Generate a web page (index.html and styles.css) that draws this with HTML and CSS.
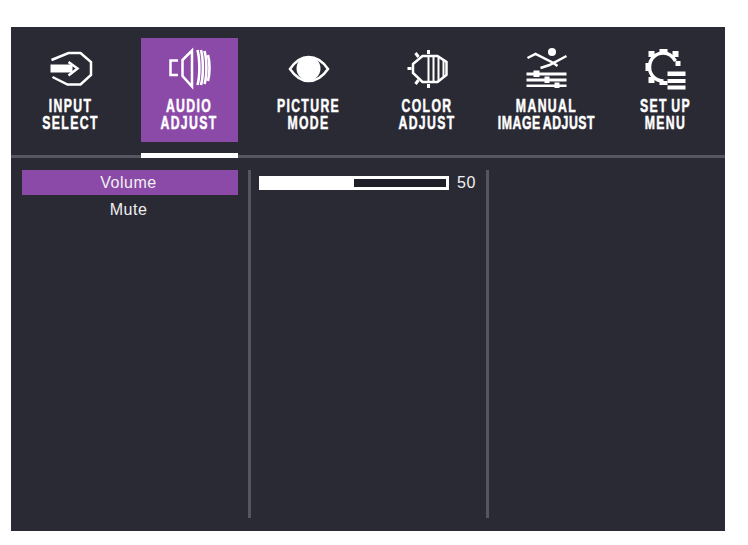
FILE: index.html
```html
<!DOCTYPE html>
<html lang="en">
<head>
<meta charset="utf-8">
<title>OSD Menu</title>
<link rel="stylesheet" href="styles.css">
</head>
<body>
<main class="osd">
  <nav class="tabs">
    <div class="tab">
      <div class="tile">
        <svg class="icon" viewBox="40.5 47 60 46">
          <path class="line" d="M51 60 L68 53 H80 L90.500 62 V75 L80 84.500 H67 L52 77"/>
          <path class="fill" d="M50 64.500 H72 V72.500 H50 Z"/>
          <path class="line" d="M68 62 L77 68.500 L68 75.500"/>
        </svg>
        <span class="label">INPUT<br>SELECT</span>
      </div>
    </div>
    <div class="tab is-active">
      <div class="tile">
        <svg class="icon" viewBox="159.5 47 60 46">
          <path class="line" d="M177.500 60.500 H170 V75 H177.500"/>
          <path class="line" d="M182 60 L191.500 50.500 V86.500 L182 76 Z"/>
          <path class="line thin" d="M197 50 C199.500 60 199.500 76 197 85"/>
          <path class="line thin" d="M200.500 50 C203 60 203 76 200.500 85"/>
          <path class="line thin" d="M204 51 C206.500 60 206.500 76 204 84"/>
          <path class="line thin" d="M207.500 55 C209.500 62 209.500 74 207.500 81"/>
        </svg>
        <span class="label">AUDIO<br>ADJUST</span>
      </div>
    </div>
    <div class="tab">
      <div class="tile">
        <svg class="icon" viewBox="278.5 47 60 46">
          <path class="line" d="M289.500 69 C295 61 301 57 308 57 C315 57 322 61 327.500 69 C322 77 315 81 308 81 C301 81 295 77 289.500 69 Z"/>
          <circle class="fill" cx="308" cy="68.500" r="12"/>
        </svg>
        <span class="label">PICTURE<br>MODE</span>
      </div>
    </div>
    <div class="tab">
      <div class="tile">
        <svg class="icon" viewBox="397.500 47 60 46">
          <path class="line" d="M412.500 64 L422 56 H437 L446 62 V75 L437 82 H422 L412.500 73 Z"/>
          <path class="line narrow" d="M428 56 V82 M433 56 V82 M438 57 V81 M443 60 V78"/>
          <path class="line heavy" d="M428 50 V54 M428 84 V88 M407 68.500 H411 M415 53 L418 57 M415 84 L418 80"/>
        </svg>
        <span class="label">COLOR<br>ADJUST</span>
      </div>
    </div>
    <div class="tab">
      <div class="tile">
        <svg class="icon" viewBox="516.500 47 60 46">
          <circle class="fill" cx="551.500" cy="52" r="4"/>
          <path class="line" d="M527 58 L535 54 L553 63 L557 66"/>
          <path class="line" d="M566 56 L549 65 L540 68"/>
          <path class="fill" d="M526 72.500 H533 V70.500 H539 V72.500 H566 V75.500 H539 V77 H533 V75.500 H526 Z M526 78.500 H544 V76.500 H549 V78.500 H566 V81.500 H549 V83 H544 V81.500 H526 Z M526 84.500 H554 V82.500 H559 V84.500 H566 V87 H559 V88 H554 V87 H526 Z"/>
        </svg>
        <span class="label">MANUAL<br><span class="tight">IMAGE ADJUST</span></span>
      </div>
    </div>
    <div class="tab">
      <div class="tile">
        <svg class="icon" viewBox="635.500 47 60 46">
          <path class="line wide" d="M675 61 C672 56 668 53 663 53 C655 53 649 59 649 67 C649 75 655 81 663 81"/>
          <path class="fill" d="M659 49 H667 V53 H659 Z M648 51 H654 V57 H648 Z M672 51 H678 V57 H672 Z M645 63 H649 V71 H645 Z M648 77 H654 V83 H648 Z M659 81 H667 V85 H659 Z M675 61 H680 V66 H675 Z"/>
          <path class="fill" d="M667 71.500 H685 V76 H667 Z M667 79 H685 V83 H667 Z M667 85.500 H685 V89.500 H667 Z"/>
        </svg>
        <span class="label">SET UP<br>MENU</span>
      </div>
    </div>
  </nav>
  <section class="content">
    <ul class="menu">
      <li class="menu-item is-selected">Volume</li>
      <li class="menu-item">Mute</li>
    </ul>
    <div class="detail">
      <div class="slider">
        <div class="track"><div class="level" style="width: 50%"></div></div>
        <span class="value">50</span>
      </div>
    </div>
    <div class="aux"></div>
  </section>
</main>
</body>
</html>
```
FILE: styles.css
```css
html, body {
  margin: 0;
  padding: 0;
  background: #fff;
}

body {
  padding: 27px 0 14px 11px;
  font-family: "Liberation Sans", Arial, sans-serif;
}

.osd {
  width: 714px;
  height: 504px;
  background: #2a2a35;
  color: #fff;
  display: flex;
  flex-direction: column;
}

.tabs {
  display: grid;
  grid-template-columns: repeat(6, 119px);
  height: 128px;
  border-bottom: 3px solid #565660;
  flex: none;
}

.tab {
  position: relative;
  padding-top: 11px;
}

.tile {
  width: 97px;
  height: 104px;
  margin: 0 auto;
  display: flex;
  flex-direction: column;
  align-items: center;
  padding-top: 9px;
  box-sizing: border-box;
}

.is-active .tile {
  background: #8b4aa8;
}

.is-active::after {
  content: "";
  position: absolute;
  left: 11px;
  width: 97px;
  bottom: -3px;
  height: 5px;
  background: #fff;
}

.icon {
  width: 60px;
  height: 46px;
  flex: none;
}

.line {
  fill: none;
  stroke: #fff;
  stroke-width: 2.5;
}

.line.thin {
  stroke-width: 2.6;
}

.line.narrow {
  stroke-width: 2;
}

.line.heavy {
  stroke-width: 3;
}

.line.wide {
  stroke-width: 3.5;
}

.fill {
  fill: #fff;
}

.label {
  margin-top: 5px;
  font-family: "Liberation Sans", Arial, sans-serif;
  font-weight: 700;
  font-size: 18px;
  line-height: 17px;
  letter-spacing: 2px;
  word-spacing: -2px;
  text-align: center;
  white-space: nowrap;
  transform: scaleX(0.68);
  -webkit-text-stroke: 0.5px #fff;
}

.tight {
  letter-spacing: 0.8px;
  word-spacing: -2px;
}

.content {
  flex: 1;
  display: grid;
  grid-template-columns: 237px 241px 1fr;
  padding: 12px 0 13px;
  min-height: 0;
}

.menu {
  list-style: none;
  margin: 0;
  padding: 0 10px 0 11px;
}

.menu-item {
  height: 25px;
  padding-right: 3px;
  margin-bottom: 2px;
  font-size: 16px;
  line-height: 25px;
  letter-spacing: 0.5px;
  text-align: center;
  color: #f0f0f0;
}

.menu-item.is-selected {
  background: #8b4aa8;
}

.detail {
  border-left: 3px solid #565660;
  border-right: 3px solid #565660;
  padding: 6px 0 0 8px;
}

.slider {
  display: flex;
  align-items: center;
  gap: 8px;
}

.track {
  width: 190px;
  height: 14px;
  box-sizing: border-box;
  border: 3px solid #fff;
  background: #1f1f2a;
  flex: none;
}

.level {
  height: 100%;
  background: #fff;
}

.value {
  font-size: 16px;
  line-height: 14px;
  letter-spacing: 0.5px;
  color: #f0f0f0;
}
```
